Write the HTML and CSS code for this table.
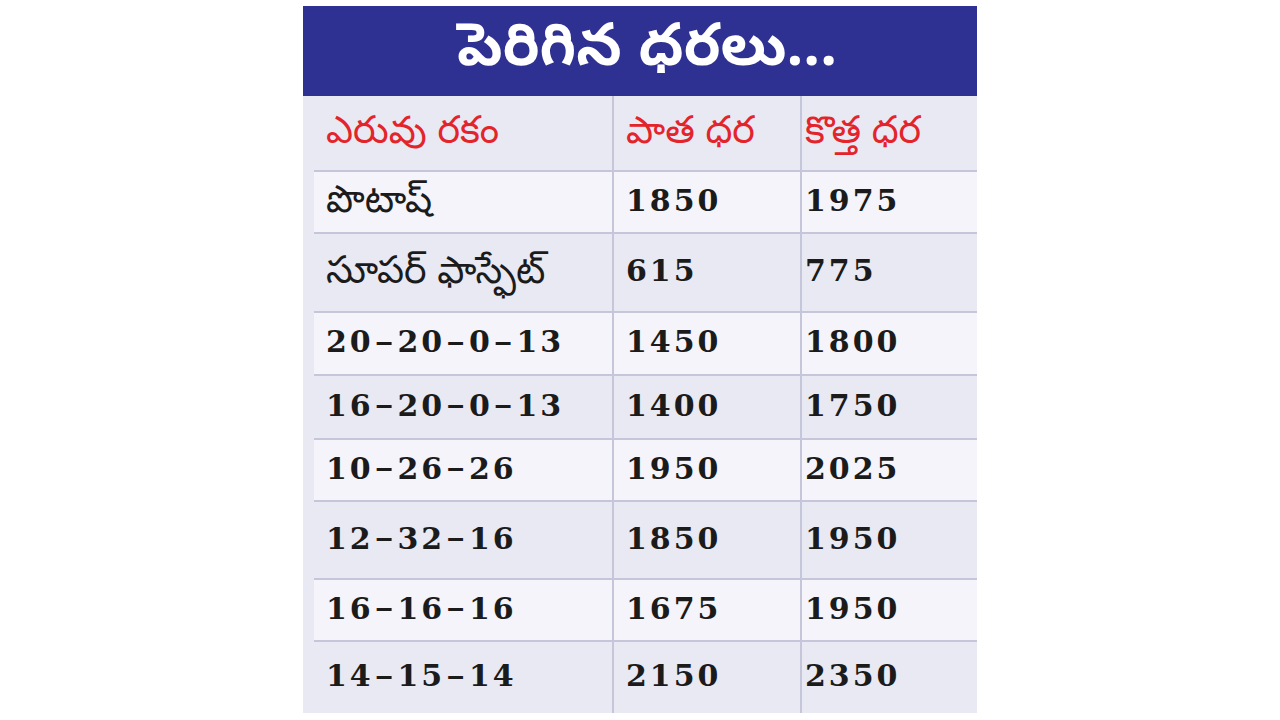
FILE: index.html
```html
<!DOCTYPE html>
<html lang="te">
<head>
<meta charset="utf-8">
<title>పెరిగిన ధరలు</title>
<link rel="stylesheet" href="styles.css">
</head>
<body>
<div class="board">
  <div class="title">పెరిగిన ధరలు...</div>
  <div class="table">
    <div class="row head h74">
      <div class="cell te red">ఎరువు రకం</div>
      <div class="cell te red">పాత ధర</div>
      <div class="cell te red">కొత్త ధర</div>
    </div>
    <div class="row light h62">
      <div class="cell te">పొటాష్</div>
      <div class="cell num">1850</div>
      <div class="cell num">1975</div>
    </div>
    <div class="row dark h79">
      <div class="cell te">సూపర్ ఫాస్ఫేట్</div>
      <div class="cell num">615</div>
      <div class="cell num">775</div>
    </div>
    <div class="row light h63">
      <div class="cell num">20<span class="dash">–</span>20<span class="dash">–</span>0<span class="dash">–</span>13</div>
      <div class="cell num">1450</div>
      <div class="cell num">1800</div>
    </div>
    <div class="row dark h64">
      <div class="cell num">16<span class="dash">–</span>20<span class="dash">–</span>0<span class="dash">–</span>13</div>
      <div class="cell num">1400</div>
      <div class="cell num">1750</div>
    </div>
    <div class="row light h62">
      <div class="cell num">10<span class="dash">–</span>26<span class="dash">–</span>26</div>
      <div class="cell num">1950</div>
      <div class="cell num">2025</div>
    </div>
    <div class="row dark h78">
      <div class="cell num">12<span class="dash">–</span>32<span class="dash">–</span>16</div>
      <div class="cell num">1850</div>
      <div class="cell num">1950</div>
    </div>
    <div class="row light h62">
      <div class="cell num">16<span class="dash">–</span>16<span class="dash">–</span>16</div>
      <div class="cell num">1675</div>
      <div class="cell num">1950</div>
    </div>
    <div class="row dark h73 last">
      <div class="cell num">14<span class="dash">–</span>15<span class="dash">–</span>14</div>
      <div class="cell num">2150</div>
      <div class="cell num">2350</div>
    </div>
  </div>
</div>
</body>
</html>
```
FILE: styles.css
```css
html, body {
  margin: 0;
  padding: 0;
  background: #ffffff;
}
body {
  font-family: "Noto Sans Telugu", "Noto Sans", sans-serif;
}
.board {
  width: 674px;
  margin: 6px auto 0;
}
.title {
  height: 90px;
  background: #2e3192;
  color: #ffffff;
  font-family: "Noto Sans Telugu", "Noto Sans", sans-serif;
  font-weight: 700;
  font-size: 59px;
  line-height: 1;
  display: flex;
  align-items: center;
  justify-content: center;
  padding-left: 14px;
  padding-top: 4px;
  box-sizing: border-box;
}
.table {
  background: #e9e9f3;
  padding-left: 11px;
}
.row {
  display: grid;
  grid-template-columns: 298px 188px 177px;
  box-sizing: border-box;
  border-top: 2px solid #c6c6da;
}
.row.head {
  border-top: none;
  background: #e9e9f3;
}
.row.light { background: #f4f4fa; }
.row.dark { background: #e9e9f3; }
.h62 { height: 62px; }
.h63 { height: 63px; }
.h64 { height: 64px; }
.h73 { height: 73px; }
.h74 { height: 74px; }
.h78 { height: 78px; }
.h79 { height: 79px; }
.cell {
  display: flex;
  align-items: center;
  padding-bottom: 4px;
  box-sizing: border-box;
  color: #1b1b1b;
}
.cell + .cell {
  border-left: 2px solid #c6c6da;
}
.cell:first-child { padding-left: 12px; }
.cell:nth-child(2) { padding-left: 12px; }
.cell:nth-child(3) { padding-left: 3px; }
.te {
  font-family: "Noto Sans Telugu", "Noto Sans", sans-serif;
  font-size: 38px;
  line-height: 1;
  padding-top: 6px;
  padding-bottom: 0;
}
.red { color: #e3242b; }
.num {
  font-family: "DejaVu Serif", "Liberation Serif", serif;
  font-weight: 700;
  font-size: 30px;
  letter-spacing: 3px;
}
.dash {
  font-family: "Liberation Sans", sans-serif;
  font-weight: 700;
  margin: 0 2px;
}
```
